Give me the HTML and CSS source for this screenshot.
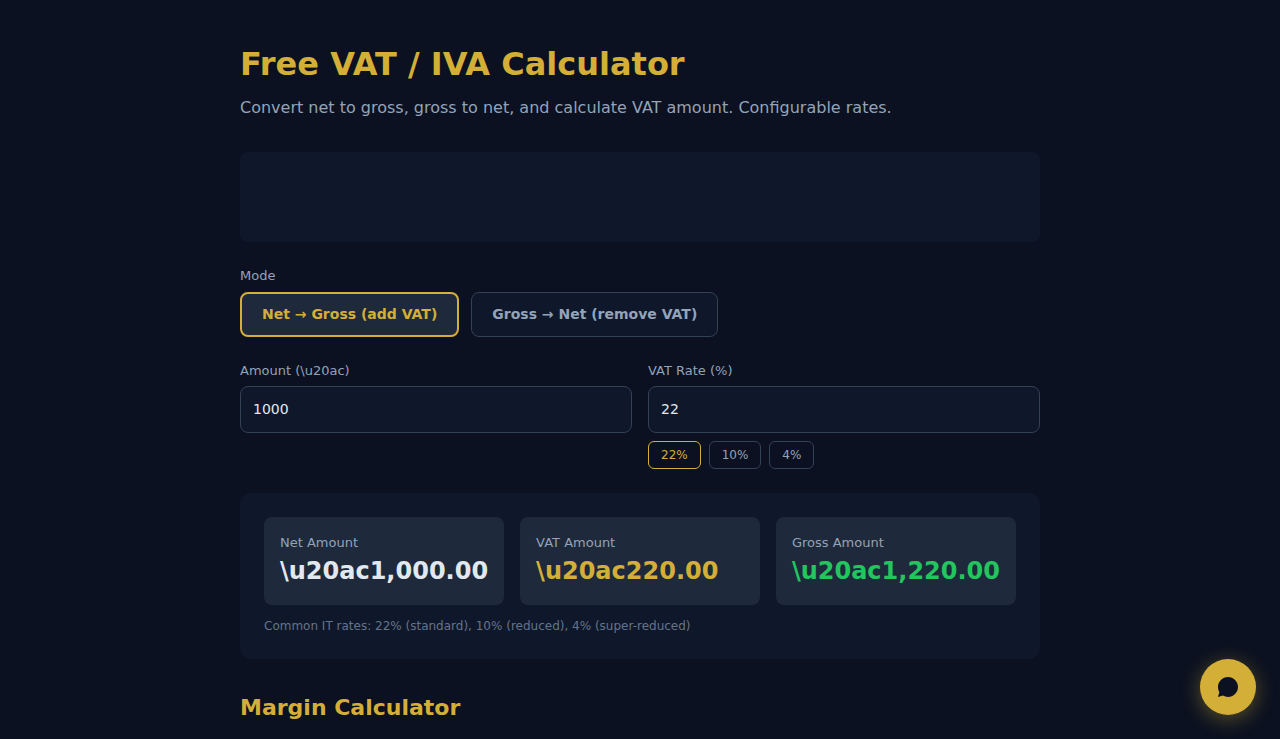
FILE: index.html
```html
<!DOCTYPE html>
<html lang="en">
<head>
  <meta charset="UTF-8">
  <meta name="viewport" content="width=device-width, initial-scale=1.0">
  <title>Free VAT / IVA Calculator</title>
  <link rel="stylesheet" href="styles.css">
</head>
<body>
  <main class="container">
    <h1>Free VAT / IVA Calculator</h1>
    <p class="subtitle">Convert net to gross, gross to net, and calculate VAT amount. Configurable rates.</p>

    <div class="banner"></div>

    <!-- Mode -->
    <section class="field mode">
      <span class="label" id="mode-label">Mode</span>
      <div class="mode-buttons" role="group" aria-labelledby="mode-label">
        <button type="button" class="mode-btn active">Net → Gross (add VAT)</button>
        <button type="button" class="mode-btn">Gross → Net (remove VAT)</button>
      </div>
    </section>

    <!-- Inputs -->
    <div class="inputs">
      <div class="field">
        <label class="label" for="amount">Amount (\u20ac)</label>
        <input type="text" inputmode="decimal" id="amount" value="1000">
      </div>
      <div class="field">
        <label class="label" for="rate">VAT Rate (%)</label>
        <input type="text" inputmode="decimal" id="rate" value="22">
        <div class="presets">
          <button type="button" class="preset active">22%</button>
          <button type="button" class="preset">10%</button>
          <button type="button" class="preset">4%</button>
        </div>
      </div>
    </div>

    <!-- Results -->
    <section class="results">
      <div class="cards">
        <div class="card">
          <div class="label">Net Amount</div>
          <div class="value">\u20ac1,000.00</div>
        </div>
        <div class="card">
          <div class="label">VAT Amount</div>
          <div class="value gold">\u20ac220.00</div>
        </div>
        <div class="card">
          <div class="label">Gross Amount</div>
          <div class="value green">\u20ac1,220.00</div>
        </div>
      </div>
      <p class="note">Common IT rates: 22% (standard), 10% (reduced), 4% (super-reduced)</p>
    </section>

    <h2>Margin Calculator</h2>
  </main>

  <button type="button" class="chat-btn" aria-label="Open chat">
    <svg width="24" height="24" viewBox="0 0 24 24" fill="currentColor" aria-hidden="true">
      <path d="M12 2C6.48 2 2 6.48 2 12c0 1.85.5 3.58 1.38 5.07L2 22l4.93-1.38A9.95 9.95 0 0 0 12 22c5.52 0 10-4.48 10-10S17.52 2 12 2z"/>
    </svg>
  </button>
</body>
</html>
```
FILE: styles.css
```css
* {
  box-sizing: border-box;
}

body {
  margin: 0;
  background: #0b1120;
  color: #e2e8f0;
  font-family: "DejaVu Sans", sans-serif;
  line-height: 1.5;
  overflow-x: hidden;
}

.container {
  max-width: 848px;
  margin: 0 auto;
  padding: 40px 24px 0;
}

h1 {
  margin: 0 0 8px;
  color: #d4af37;
  font-size: 32px;
}

.subtitle {
  margin: 0 0 32px;
  color: #94a3b8;
  font-size: 16px;
}

.banner {
  height: 90px;
  margin-bottom: 24px;
  background: #0f172a;
  border-radius: 8px;
}

.label {
  display: block;
  margin-bottom: 6px;
  color: #94a3b8;
  font-size: 13px;
}

button,
input {
  font-family: inherit;
  cursor: pointer;
}

.mode {
  margin-bottom: 24px;
}

.mode-buttons {
  display: flex;
  flex-wrap: wrap;
  gap: 12px;
}

.mode-btn {
  padding: 13px 20px;
  background: #0f172a;
  color: #94a3b8;
  border: 1px solid #334155;
  border-radius: 8px;
  font-size: 14px;
  font-weight: 600;
  line-height: 17px;
}

.mode-btn.active {
  padding: 12px 20px;
  background: #1e293b;
  color: #d4af37;
  border: 2px solid #d4af37;
}

.inputs {
  display: grid;
  grid-template-columns: 1fr 1fr;
  gap: 16px;
  margin-bottom: 24px;
}

input {
  display: block;
  width: 100%;
  padding: 12px;
  background: #0f172a;
  color: #e2e8f0;
  border: 1px solid #334155;
  border-radius: 8px;
  font-size: 14px;
  line-height: 21px;
  cursor: text;
}

.presets {
  display: flex;
  gap: 8px;
  margin-top: 8px;
}

.preset {
  padding: 6px 12px;
  background: transparent;
  color: #94a3b8;
  border: 1px solid #334155;
  border-radius: 6px;
  font-size: 12px;
}

.preset.active {
  color: #d4af37;
  border-color: #d4af37;
}

.results {
  margin-bottom: 32px;
  padding: 24px;
  background: #0f172a;
  border-radius: 12px;
}

.cards {
  display: grid;
  grid-template-columns: repeat(3, 1fr);
  gap: 16px;
}

.card {
  padding: 16px;
  background: #1e293b;
  border-radius: 8px;
}

.card .label {
  margin: 0;
}

.value {
  font-size: 24px;
  font-weight: 700;
}

.gold {
  color: #d4af37;
}

.green {
  color: #22c55e;
}

.note {
  margin: 12px 0 0;
  color: #64748b;
  font-size: 12px;
}

h2 {
  margin: 0;
  color: #d4af37;
  font-size: 22px;
}

/* Floating chat button */
.chat-btn {
  position: fixed;
  right: 24px;
  bottom: 24px;
  display: flex;
  align-items: center;
  justify-content: center;
  width: 56px;
  height: 56px;
  padding: 0;
  background: #d4af37;
  color: #0b1120;
  border: none;
  border-radius: 50%;
  box-shadow: 0 4px 20px rgba(212, 175, 55, 0.4);
}

@media (max-width: 640px) {
  .inputs,
  .cards {
    grid-template-columns: 1fr;
  }
}
```
